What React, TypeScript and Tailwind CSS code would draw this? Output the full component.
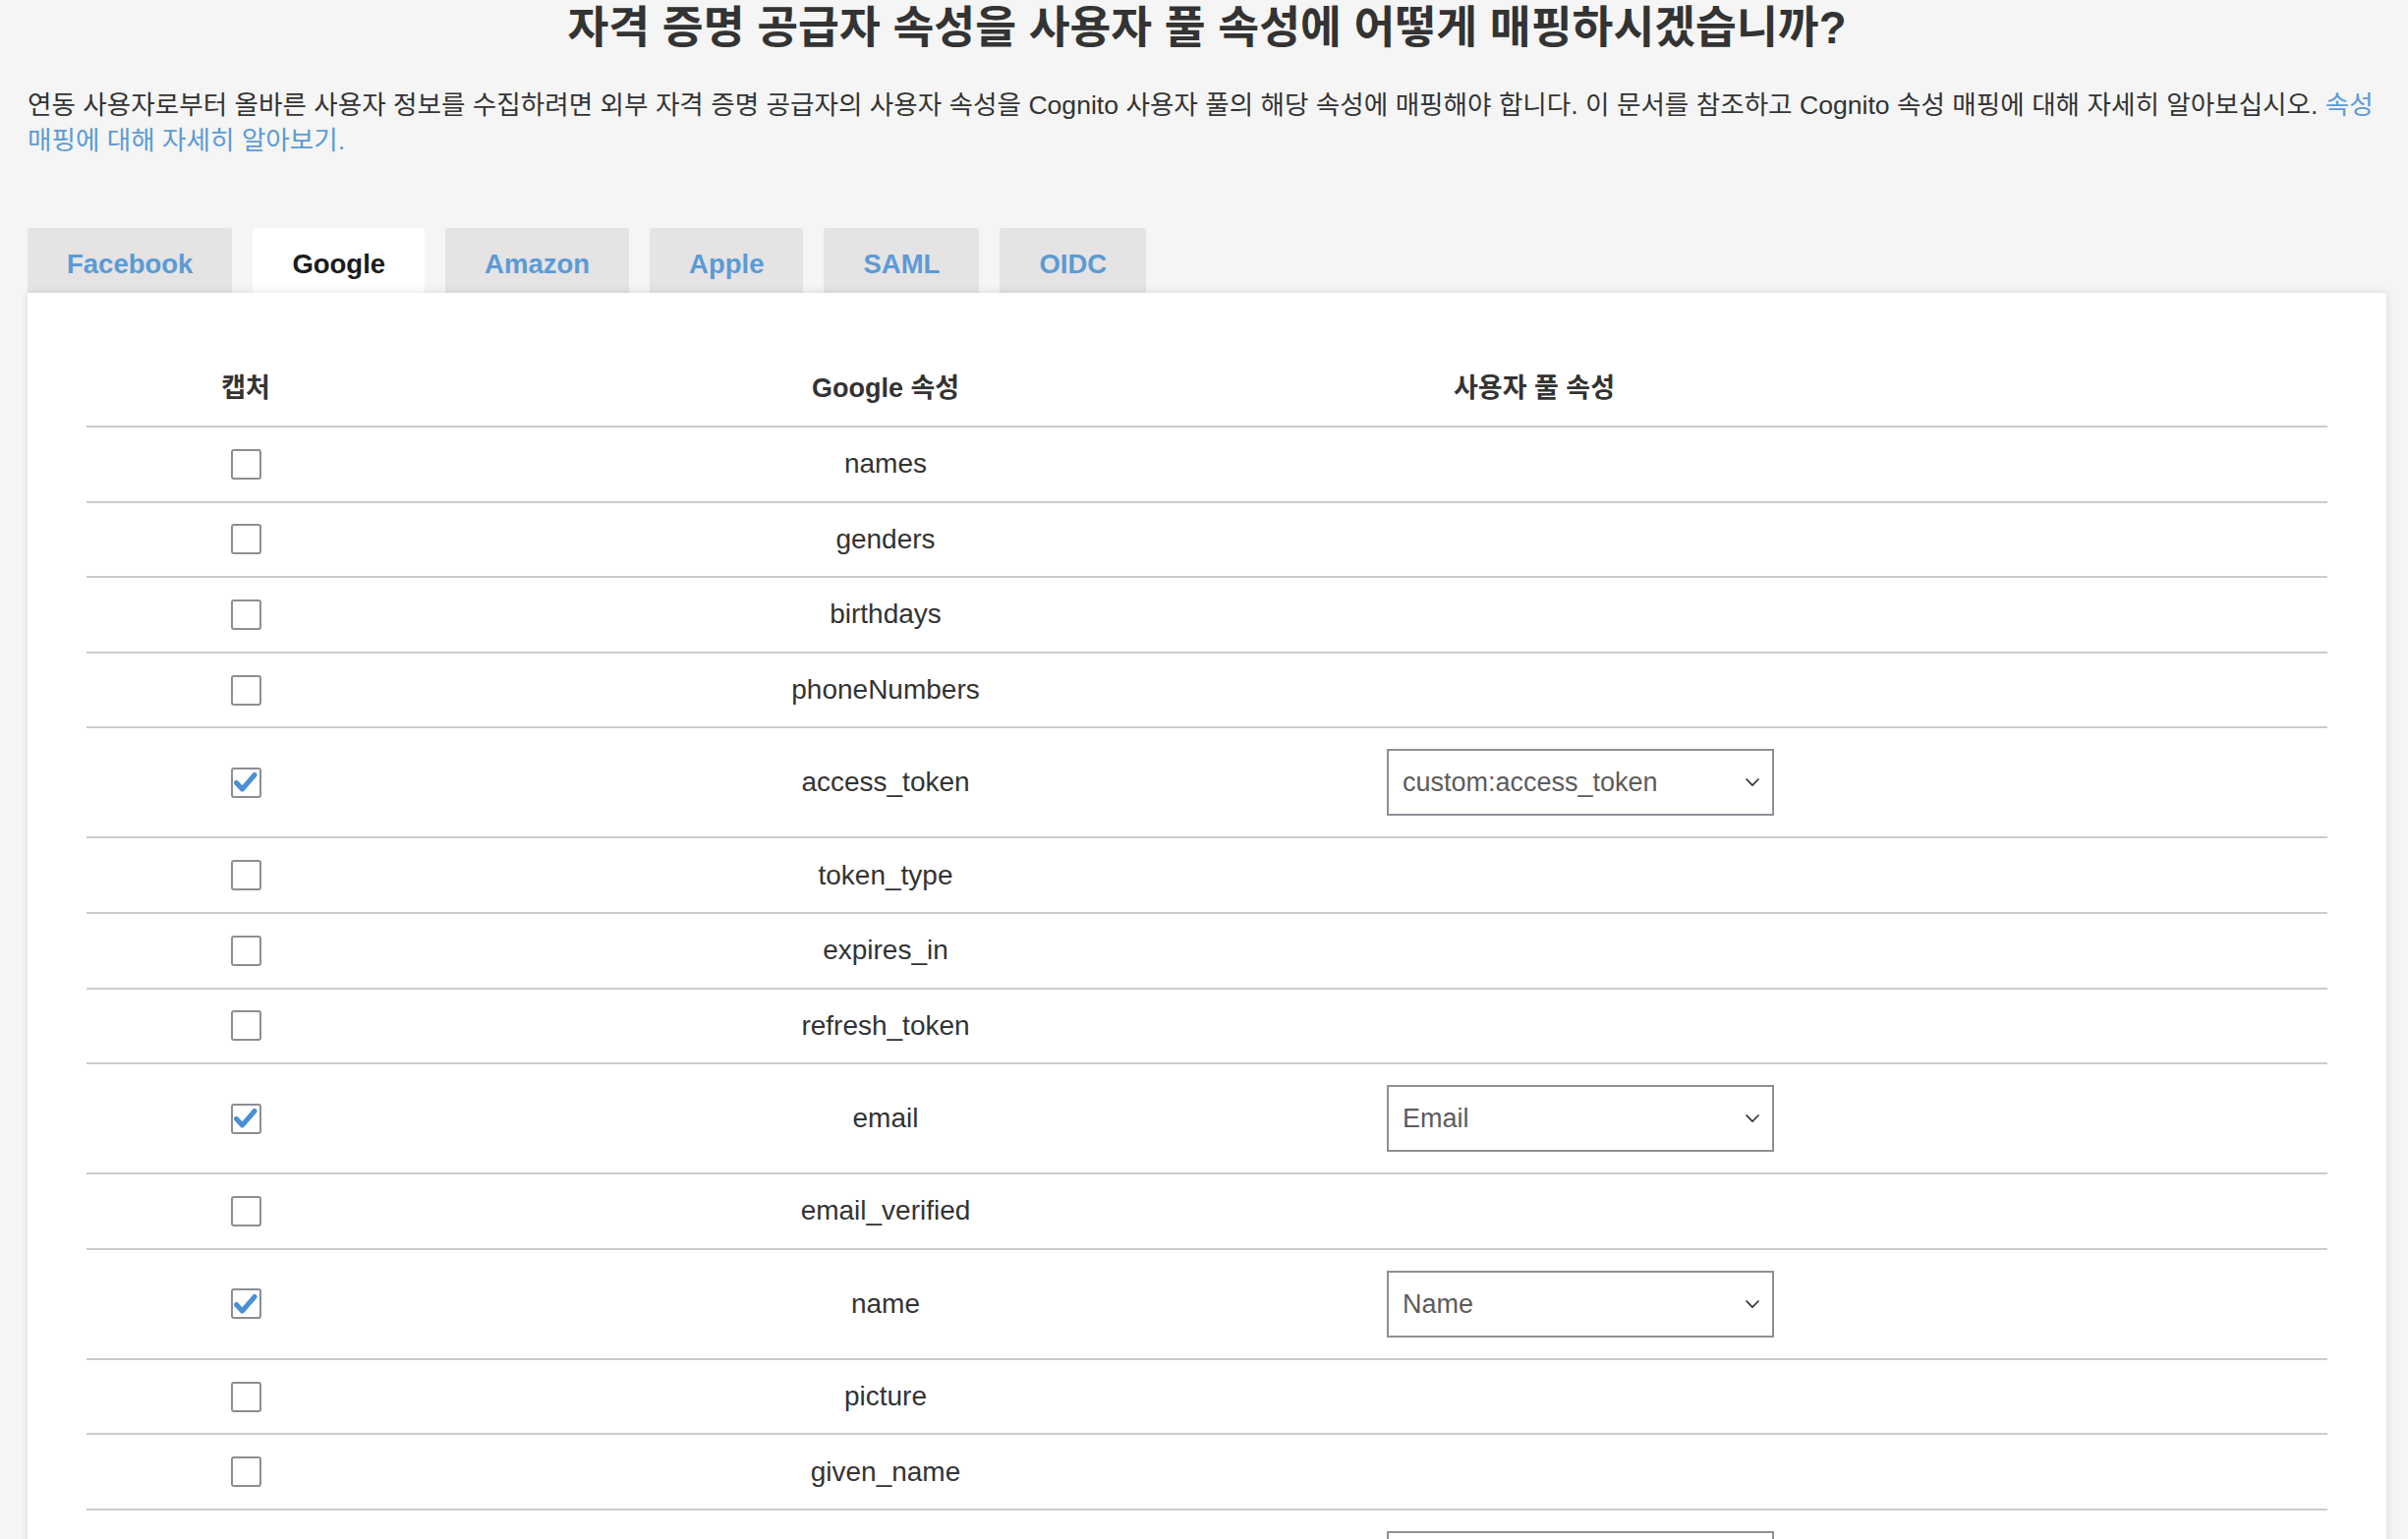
import React from 'react';

const tabs = [
  { label: 'Facebook' },
  { label: 'Google', active: true },
  { label: 'Amazon' },
  { label: 'Apple' },
  { label: 'SAML' },
  { label: 'OIDC' },
];

const rows: { attr: string; mapped?: string }[] = [
  { attr: 'names' },
  { attr: 'genders' },
  { attr: 'birthdays' },
  { attr: 'phoneNumbers' },
  { attr: 'access_token', mapped: 'custom:access_token' },
  { attr: 'token_type' },
  { attr: 'expires_in' },
  { attr: 'refresh_token' },
  { attr: 'email', mapped: 'Email' },
  { attr: 'email_verified' },
  { attr: 'name', mapped: 'Name' },
  { attr: 'picture' },
  { attr: 'given_name' },
  { attr: 'family_name', mapped: 'Family Name' },
  { attr: 'locale' },
];

function Checkbox({ checked }: { checked?: boolean }) {
  return (
    <div className="w-[31px] h-[31px] border-2 border-[#8b8f93] rounded-[3px] bg-white flex items-center justify-center">
      {checked && (
        <svg width="24" height="22" viewBox="0 0 24 22">
          <path d="M2.5 11.5 L8.5 18 L21 3.5" fill="none" stroke="#4a8fd6" strokeWidth="5" strokeLinecap="round" strokeLinejoin="round" />
        </svg>
      )}
    </div>
  );
}

function Select({ value }: { value: string }) {
  return (
    <div className="w-[394px] h-[68px] border-2 border-[#8d9196] bg-white flex items-center justify-between pl-[14px] pr-[12px]">
      <span className="text-[27px] text-[#5c5c5c]">{value}</span>
      <svg width="16" height="10" viewBox="0 0 16 10">
        <polyline points="1.5,1.5 8,8 14.5,1.5" fill="none" stroke="#333" strokeWidth="1.6" />
      </svg>
    </div>
  );
}

export default function App() {
  return (
    <div
      className="min-h-screen w-full bg-[#f4f5f4] pl-[28px] pr-[22px] text-[#333]"
      style={{ fontFamily: '"Liberation Sans", "Noto Sans CJK KR", Arial, sans-serif' }}
    >
      <h1 className="text-center text-[45.5px] leading-[57px] font-bold text-[#333]">
        자격 증명 공급자 속성을 사용자 풀 속성에 어떻게 매핑하시겠습니까?
      </h1>
      <p className="mt-[32px] text-[26.6px] leading-[36px] text-[#333]">
        연동 사용자로부터 올바른 사용자 정보를 수집하려면 외부 자격 증명 공급자의 사용자 속성을 Cognito 사용자 풀의 해당 속성에 매핑해야 합니다. 이 문서를 참조하고 Cognito 속성 매핑에 대해 자세히 알아보십시오.{' '}
        <a className="text-[#5b9bd5]">속성 매핑에 대해 자세히 알아보기.</a>
      </p>

      <div className="mt-[71px] flex gap-[21px]">
        {tabs.map((t) => (
          <div
            key={t.label}
            className={
              t.active
                ? 'h-[66px] px-10 pt-2 flex items-center rounded-t-[3px] bg-white text-[27.5px] font-bold text-[#1c1c1c]'
                : 'h-[66px] px-10 pt-2 flex items-center rounded-t-[3px] bg-[#e5e3e4] text-[27.5px] font-bold text-[#5b9bd5]'
            }
          >
            {t.label}
          </div>
        ))}
      </div>

      <div className="relative z-10 bg-white rounded-tr-[4px] shadow-[0_0_10px_rgba(0,0,0,0.12)] px-[60px] pt-[60px] pb-10">
        <div className="grid grid-cols-[324px_978px_342px_1fr] h-[77px] items-center border-b-2 border-[#cccccc] text-[27px] font-bold text-[#333]">
          <div className="text-center">캡처</div>
          <div className="text-center">Google 속성</div>
          <div className="text-center">사용자 풀 속성</div>
          <div />
        </div>
        {rows.map((r) => (
          <div
            key={r.attr}
            className={
              r.mapped
                ? 'grid grid-cols-[324px_978px_342px_1fr] h-[112px] items-center border-b-2 border-[#cccccc]'
                : 'grid grid-cols-[324px_978px_342px_1fr] h-[76.6px] items-center border-b-2 border-[#cccccc]'
            }
          >
            <div className="flex justify-center">
              <Checkbox checked={!!r.mapped} />
            </div>
            <div className="text-center text-[28px] text-[#333]">{r.attr}</div>
            <div className="col-span-2 pl-[21px]">{r.mapped && <Select value={r.mapped} />}</div>
          </div>
        ))}
      </div>
    </div>
  );
}
